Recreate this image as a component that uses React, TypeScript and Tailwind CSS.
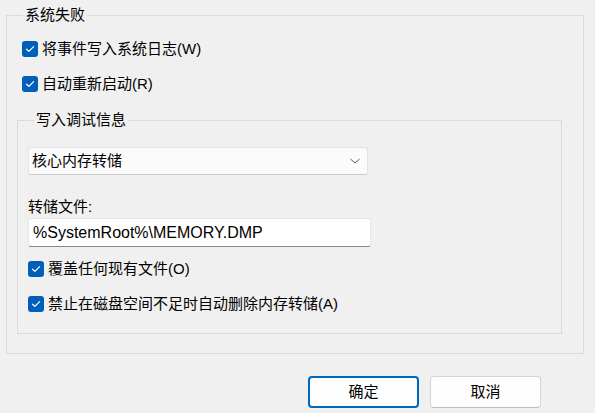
import React from "react";

const font = { fontFamily: '"Liberation Sans", "Noto Sans CJK SC", sans-serif' };

function Check({ label, className = "" }: { label: string; className?: string }) {
  return (
    <div className={`flex h-[20px] items-center gap-[4px] ${className}`}>
      <span className="flex h-[16px] w-[16px] items-center justify-center rounded-[3px] bg-[#005fb8]">
        <svg width="10" height="8" viewBox="0 0 10 8" fill="none">
          <path d="M1.5 4.2 L3.9 6.4 L8.6 1.6" stroke="#ffffff" strokeWidth="1.2" strokeLinecap="round" strokeLinejoin="round" />
        </svg>
      </span>
      <span className="text-[15px] leading-[20px] text-black">{label}</span>
    </div>
  );
}

export default function App() {
  return (
    <div className="h-[413px] w-[595px] overflow-hidden bg-[#f0f0f0] pt-[5px] text-black" style={font}>
      <fieldset className="ml-[6px] w-[578px] border border-[#dadada] pb-[19px] pl-[10px] pr-[21px]">
        <legend className="ml-[6px] px-[2px] text-[15px] leading-[20px]">系统失败</legend>
        <Check className="ml-[5px] mt-[14px]" label="将事件写入系统日志(W)" />
        <Check className="ml-[5px] mt-[15px]" label="自动重新启动(R)" />

        <fieldset className="mt-[16px] border border-[#dadada] pb-[19px] pl-[10px]">
          <legend className="ml-[6px] px-[2px] text-[15px] leading-[20px]">写入调试信息</legend>

          <div className="mt-[17px] flex h-[28px] w-[340px] items-center justify-between rounded-[3px] border border-[#e3e3e3] border-b-[#c9c9c9] bg-[#fbfbfb] pl-[3px] pr-[6px]">
            <span className="text-[15px] leading-[20px]">核心内存转储</span>
            <svg width="12" height="8" viewBox="0 0 12 8" fill="none">
              <path d="M1.5 2 L6 6 L10.5 2" stroke="#5a5a5a" strokeWidth="1" />
            </svg>
          </div>

          <div className="mt-[22px] text-[15px] leading-[20px]">转储文件:</div>
          <div className="mt-[1px] flex h-[29px] w-[343px] items-center rounded-[3px] border border-[#e6e6e6] border-b-[#868686] bg-white pl-[4px]">
            <span className="text-[16px] leading-[20px]">%SystemRoot%\MEMORY.DMP</span>
          </div>

          <Check className="mt-[12px]" label="覆盖任何现有文件(O)" />
          <Check className="mt-[15px]" label="禁止在磁盘空间不足时自动删除内存转储(A)" />
        </fieldset>
      </fieldset>

      <div className="mt-[22px] flex gap-[11px] pl-[308px]">
        <button className="flex h-[32px] w-[111px] items-center justify-center rounded-[4px] border-2 border-[#0067c0] bg-[#fdfdfd] text-[15px] leading-[20px]">
          确定
        </button>
        <button className="flex h-[32px] w-[111px] items-center justify-center rounded-[4px] border border-[#d4d4d4] border-b-[#bcbcbc] bg-[#fdfdfd] text-[15px] leading-[20px]">
          取消
        </button>
      </div>
    </div>
  );
}
